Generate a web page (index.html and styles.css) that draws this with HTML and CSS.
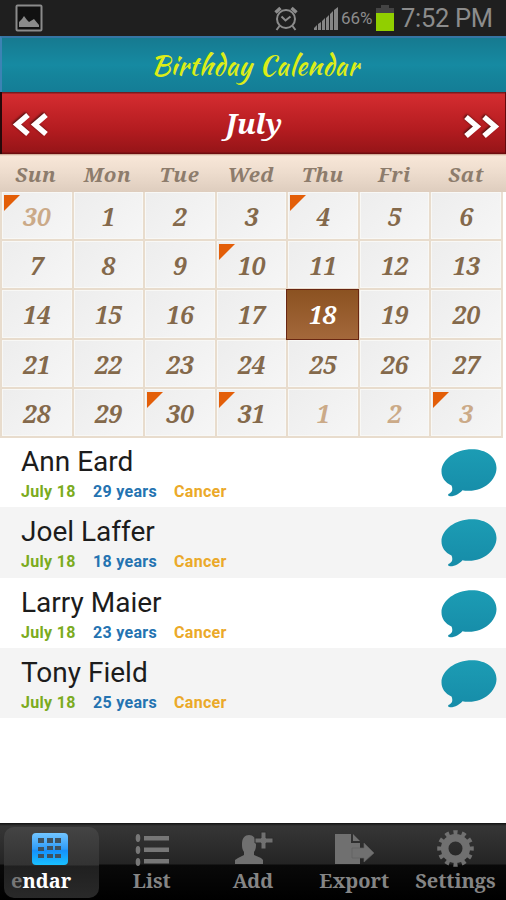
FILE: index.html
```html
<!DOCTYPE html>
<html lang="en">
<head>
<meta charset="utf-8">
<title>Birthday Calendar</title>
<link rel="stylesheet" href="styles.css">
</head>
<body>
<svg class="defs" width="0" height="0" aria-hidden="true">
  <defs>
    <linearGradient id="teal" x1="0" y1="0" x2="0" y2="1"><stop offset="0" stop-color="#1c9cb4"/><stop offset="1" stop-color="#168ca8"/></linearGradient>
    <linearGradient id="blue" x1="0" y1="0" x2="0" y2="1"><stop offset="0" stop-color="#72c5ff"/><stop offset=".5" stop-color="#2f9cf8"/><stop offset=".55" stop-color="#1590fb"/><stop offset="1" stop-color="#19c0ff"/></linearGradient>
    <symbol id="bubble" viewBox="0 0 56 48"><path fill="url(#teal)" d="M31 .3C45 .3 55.500 8 55.500 19C55.500 31 43 41.800 28 41.800C25 41.800 23 41.500 21.500 41.200C18.500 44.500 14 47.500 9 47.300C6.500 47 6.700 45 8.500 44.500C11.500 43 12 40 10.500 36.500C4 33.500.5 28.500.5 22.500C.5 10.500 14.500.3 31 .3Z"/></symbol>
  </defs>
</svg>
<div class="status">
  <svg class="picture" width="28" height="28" viewBox="0 0 28 28"><rect x="1.500" y="1.500" width="25" height="25" rx="1" fill="#111" stroke="#8b8b8b" stroke-width="2"/><path fill="#8b8b8b" d="M4 23v-5l3-3 2-3 3 4 2 2 5-3 5 6v2z"/></svg>
  <svg class="alarm" width="24" height="26" viewBox="0 0 24 26" fill="none" stroke="#8c8c8c" stroke-width="2"><circle cx="12" cy="14" r="9"/><path d="M7.500 11.500l4 4 5-4M5.500 21l-3 4M18.500 21l3 4"/><path stroke-width="3.500" d="M1.500 7.500l5-4.500M22.500 7.500l-5-4.500"/></svg>
  <svg class="signal" width="24" height="23" viewBox="0 0 24 23" fill="#858585"><path d="M0 23v-2l3-3v5zM4 23v-6l3-2v8zM8 23v-9l3-3v12zM12 23v-12l3-3v15zM16 23v-16l3-3v19zM20 23v-20l4-3v23z"/></svg>
  <span class="percent">66%</span>
  <svg class="battery" width="18" height="26" viewBox="0 0 18 26"><path fill="#444" d="M5 0h8v3h5v6H0V3h5z"/><path fill="#91cf00" d="M0 8h18v18H0z"/></svg>
  <span class="clock">7:52 PM</span>
</div>
<header class="title"><h1>Birthday Calendar</h1></header>
<div class="month">
  <svg class="prev" width="37" height="28" viewBox="0 0 37 28"><path d="M16 4L5 13.500 16 23M34 4L23 13.500 34 23"/></svg>
  <h2>July</h2>
  <svg class="next" width="37" height="28" viewBox="0 0 37 28"><path d="M3 4L14 13.500 3 23M21 4L32 13.500 21 23"/></svg>
</div>
<div class="weekdays"><span>Sun</span><span>Mon</span><span>Tue</span><span>Wed</span><span>Thu</span><span>Fri</span><span>Sat</span></div>
<div class="grid">
  <div class="mark out">30</div><div>1</div><div>2</div><div>3</div><div class="mark">4</div><div>5</div><div>6</div>
  <div>7</div><div>8</div><div>9</div><div class="mark">10</div><div>11</div><div>12</div><div>13</div>
  <div>14</div><div>15</div><div>16</div><div>17</div><div class="today">18</div><div>19</div><div>20</div>
  <div>21</div><div>22</div><div>23</div><div>24</div><div>25</div><div>26</div><div>27</div>
  <div>28</div><div>29</div><div class="mark">30</div><div class="mark">31</div><div class="out">1</div><div class="out">2</div><div class="mark out">3</div>
</div>
<main class="list">
  <div class="person"><div><div class="name">Ann Eard</div><div class="info"><span class="date">July 18</span><span class="age">29 years</span><span class="sign">Cancer</span></div></div><svg class="bubble"><use href="#bubble"/></svg></div>
  <div class="person"><div><div class="name">Joel Laffer</div><div class="info"><span class="date">July 18</span><span class="age">18 years</span><span class="sign">Cancer</span></div></div><svg class="bubble"><use href="#bubble"/></svg></div>
  <div class="person"><div><div class="name">Larry Maier</div><div class="info"><span class="date">July 18</span><span class="age">23 years</span><span class="sign">Cancer</span></div></div><svg class="bubble"><use href="#bubble"/></svg></div>
  <div class="person"><div><div class="name">Tony Field</div><div class="info"><span class="date">July 18</span><span class="age">25 years</span><span class="sign">Cancer</span></div></div><svg class="bubble"><use href="#bubble"/></svg></div>
</main>
<nav class="tabs">
  <div class="tab active"><svg width="38" height="38" viewBox="0 0 38 38"><rect x="1" y="3" width="36" height="32" rx="4" fill="url(#blue)"/><path fill="#3f5260" d="M7 8h6v5H7zM16 8h6v5h-6zM24 8h6v5h-6zM7 17h6v4H7zM16 16h6v4h-6zM24 16h6v4h-6zM7 24h6v4H7zM16 24h6v4h-6zM24 24h6v4h-6z"/></svg><span><i>e</i>ndar</span></div>
  <div class="tab"><svg width="38" height="38" viewBox="0 0 38 38" fill="#777"><path d="M11 6h25v4.500H11zM11 17.500h25V22H11zM11 29h25v4.500H11z"/><ellipse cx="5" cy="8" rx="2.300" ry="4"/><ellipse cx="5" cy="20" rx="2.300" ry="4"/><ellipse cx="5" cy="32" rx="2.300" ry="4"/></svg><span>List</span></div>
  <div class="tab"><svg width="38" height="38" viewBox="0 0 38 38" fill="#707070"><path d="M1 34v-4l3-2 6-3v-3c-2-3-2-5-2-8 0-6 3-9 7-9s7 3 7 9c0 3 0 5-2 8v3l7 3 2 2v4z"/><path stroke="#2c2c2c" d="M27 2h5v6h7v5h-7v6h-5v-6h-6V8h6z"/></svg><span>Add</span></div>
  <div class="tab"><svg width="40" height="38" viewBox="0 0 40 38" fill="#707070"><path d="M1 4h16v9h9v21H1zM19 4l7 7h-7z"/><path stroke="#606060" stroke-width=".7" d="M18 18h12v-5l10 10-10 9v-4H18z"/></svg><span>Export</span></div>
  <div class="tab"><svg width="38" height="38" viewBox="0 0 38 38" fill="none" stroke="#707070"><circle cx="19.500" cy="18.500" r="10.800" stroke-width="7.600"/><circle cx="19.500" cy="18.500" r="15.800" stroke-width="5" pathLength="24" stroke-dasharray="1 1" stroke-dashoffset=".5"/></svg><span>Settings</span></div>
</nav>
</body>
</html>
```
FILE: styles.css
```css
* { box-sizing: border-box; }
body { margin: 0; width: 506px; height: 900px; overflow: hidden; background: #fff; font-family: Roboto, sans-serif; display: flex; flex-direction: column; }
h1, h2 { margin: 0; }
.defs { position: absolute; }
.status { height: 36px; flex: none; background: #1f1f1f; color: #8c8c8c; display: flex; align-items: flex-start; padding: 4px 0 0 15px; line-height: 28px; }
.alarm { margin: 1px 0 0 231px; }
.signal { margin: 3px 0 0 16px; }
.percent { font-size: 17px; margin: 0 0 0 3px; width: 35px; white-space: nowrap; }
.battery { margin-top: 1px; }
.clock { font-size: 25.500px; margin-left: 7px; white-space: nowrap; letter-spacing: -.3px; }
.title { height: 56px; flex: none; display: flex; justify-content: center; align-items: center; background: linear-gradient(#167a90, #168aa2 50%, #15859c 65%, #147d96); border-top: 2px solid #3676a4; border-left: 2px solid #3c83b4; padding: 2px 0 0 2px; }
.title h1 { font: 400 27px/50px "Kaushan Script", Lato, sans-serif; color: #dced18; white-space: nowrap; letter-spacing: .5px; }
.month { height: 62px; flex: none; display: flex; justify-content: space-between; align-items: center; background: linear-gradient(#5f171b, #d42c30 4%, #b41c20 60%, #971518 96%, #640b0d); border-left: 2px solid #26090a; border-right: 1px solid #64090c; padding: 0 5px 0 10px; }
.month h2 { font: italic 700 28px/60px "Droid Serif", "Noto Serif", "DejaVu Serif Condensed", "DejaVu Serif", serif; color: #fff; margin-left: -4px; }
.month svg { fill: none; stroke: #fff; stroke-width: 5.500; filter: drop-shadow(-1px -1px 1px #501010); }
.prev { margin-top: 3px; }
.next { margin-top: 8px; }
.weekdays, .grid { display: grid; grid-template-columns: repeat(7, 1fr); font-family: "Droid Serif", "Noto Serif", "DejaVu Serif Condensed", "DejaVu Serif", serif; font-style: italic; font-weight: 700; text-align: center; }
.weekdays { height: 38px; flex: none; padding-right: 4px; background: linear-gradient(#c49c86, #f8e7d8 5%, #eddccd 50%, #decdbe); color: #8d7c6c; font-size: 20.500px; line-height: 40px; letter-spacing: .5px; }
.grid { height: 246px; width: 503px; flex: none; grid-template-rows: repeat(5, 49.200px); border-right: 2px solid #eaded1; font-size: 24.500px; color: #84694b; line-height: 50px; }
.grid div { position: relative; min-height: 0; border-left: 2px solid #e8dccd; border-bottom: 2px solid #e8dccd; background: linear-gradient(135deg, #ededed, #f6f6f6); box-shadow: inset 0 0 0 1px #f8f8f6; }
.grid .out { color: #cbaa88; }
.grid .today { color: #fff; background: linear-gradient(#8b5221, #a4683b); border: 1px solid #682612; box-shadow: none; margin-top: -1px; margin-right: -1px; z-index: 1; }
.mark::before { content: ""; position: absolute; left: 2px; top: 3px; border-top: 16px solid #e35e08; border-right: 16px solid transparent; }
.list { flex: 1; margin-top: -1px; }
.person { height: 70.300px; display: flex; justify-content: space-between; padding: 9px 9px 0 21px; }
.person:nth-child(even) { background: #f4f4f4; }
.name { font-size: 28px; line-height: 32px; color: #1c1c1c; }
.info { display: flex; font-size: 16px; line-height: 20px; font-weight: 700; margin-top: 4px; letter-spacing: .3px; }
.date { width: 72px; color: #7bab20; }
.age { width: 81px; color: #2473b1; }
.sign { color: #eba929; }
.bubble { width: 56px; height: 48px; margin-top: 3px; }
.tabs { height: 77px; flex: none; display: grid; grid-template-columns: repeat(5, 1fr); background: linear-gradient(#111 0, #363636 3px, #242424 41px, #090909 42px, #000); font: 700 20px/24px "Droid Serif", "Noto Serif", "DejaVu Serif Condensed", "DejaVu Serif", serif; color: #858585; }
.tab { display: flex; flex-direction: column; align-items: center; padding-top: 7px; white-space: nowrap; }
.tab svg { overflow: visible; }
.tab span { margin-top: 1px; }
.active { background: linear-gradient(#444, #333 38px, #202020 39px, #292929); border-radius: 10px; margin: 4px 2px 2px 4px; padding-top: 3px; color: #fff; }
.active svg { margin-left: -3px; }
.active span { align-self: flex-start; margin-left: 7px; }
.active i { font-style: normal; color: #777; }
```
